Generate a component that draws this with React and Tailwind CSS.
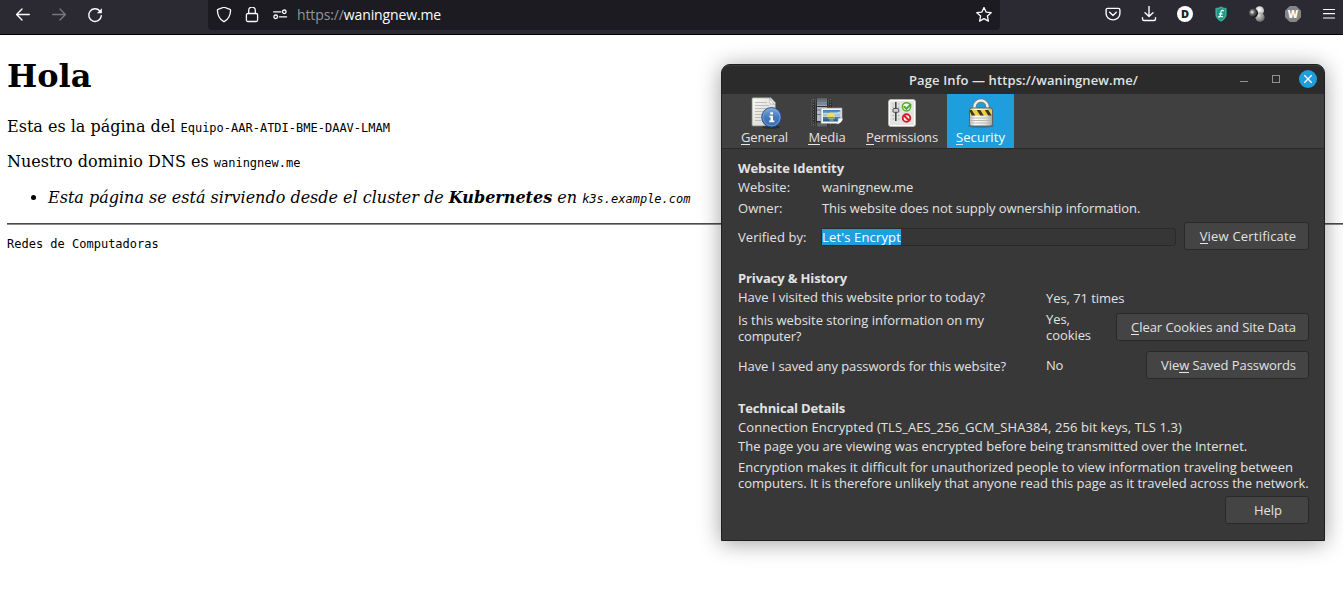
import React from "react";

const ICON = "shrink-0 block";

function Key({ children }) {
  return <span className="border-b border-[#e6e6e6] inline-block h-[16px]">{children}</span>;
}

function Button({ className, children }) {
  return (
    <button
      className={`h-7 shrink-0 rounded-[3px] border border-[#292929] bg-[#444444] text-[13px] leading-4 text-[#e2e2e2] whitespace-nowrap ${className}`}
    >
      {children}
    </button>
  );
}

function BrowserBar() {
  return (
    <header className="flex h-[35px] w-full items-start border-b border-black bg-[#2b2a33] text-[#fbfbfe]">
      <div className="flex h-[30px] w-[208px] items-center gap-5 pl-[15px]">
        <svg className={ICON} width="16" height="16" viewBox="0 0 16 16" fill="none" stroke="currentColor" strokeWidth="1.4" strokeLinecap="round" strokeLinejoin="round">
          <path d="M14.3 7.500H1.800M7 2.100 1.600 7.500 7 12.900" />
        </svg>
        <svg className={`${ICON} text-[#77767d]`} width="16" height="16" viewBox="0 0 16 16" fill="none" stroke="currentColor" strokeWidth="1.4" strokeLinecap="round" strokeLinejoin="round">
          <path d="M1.700 7.500h12.500M9 2.100 14.400 7.500 9 12.900" />
        </svg>
        <svg className={ICON} width="16" height="16" viewBox="0 0 16 16" fill="none" stroke="currentColor" strokeWidth="1.4" strokeLinecap="round">
          <path d="M12.800 4A6.300 6.300 0 1 0 14.300 8.600" />
          <path d="M14.900 1.200v5h-5z" fill="currentColor" stroke="none" />
        </svg>
      </div>
      <div className="flex h-[30px] w-[792px] items-center rounded-b bg-[#1c1b22] pl-2">
        <svg className={ICON} width="16" height="16" viewBox="0 0 16 16" fill="none" stroke="currentColor" strokeWidth="1.3" strokeLinejoin="round">
          <path d="M8 .2 14 2.400c.4.100.6.500.6.900-.2 5-1.900 8.800-6.100 11.100a1 1 0 0 1-1 0C3.300 12.100 1.600 8.300 1.400 3.300c0-.4.200-.8.600-.9z" />
        </svg>
        <svg className={`${ICON} ml-3`} width="16" height="16" viewBox="0 0 16 16" fill="none" stroke="currentColor" strokeWidth="1.3">
          <rect x="2.400" y="6.500" width="11.200" height="8" rx="1.500" />
          <path d="M4.700 6.500V3.500a3.300 3.300 0 0 1 6.600 0v3" />
        </svg>
        <svg className={`${ICON} ml-3`} width="16" height="16" viewBox="0 0 16 16" fill="none" stroke="currentColor" strokeWidth="1.300" strokeLinecap="round">
          <path d="M1.600 4.800h7.200M7.400 9.800h7.200" />
          <circle cx="12.300" cy="4.800" r="1.800" />
          <circle cx="3.700" cy="9.800" r="1.800" />
        </svg>
        <span className="ml-[9px] flex-1 text-[14px] leading-5 tracking-[-0.12px] font-['Open_Sans',sans-serif]">
          <span className="text-[#94939a]">https://</span>waningnew.me
        </span>
        <svg className={`${ICON} mr-2`} width="16" height="16" viewBox="0 0 16 16" fill="none" stroke="currentColor" strokeWidth="1.300" strokeLinejoin="round">
          <path d="m8 .4 2.100 4.700 5.100.6-3.800 3.400 1 5L8 11.600l-4.400 2.500 1-5L.8 5.700l5.100-.6z" />
        </svg>
      </div>
      <div className="flex h-7 flex-1 items-center justify-end gap-5 pr-[6px]">
        <svg className={ICON} width="16" height="16" viewBox="0 0 16 16" fill="none" stroke="currentColor" strokeWidth="1.400" strokeLinecap="round" strokeLinejoin="round">
          <path d="M2.600 2.400h10.800A1.500 1.500 0 0 1 14.900 3.900V7.500a6.900 6.400 0 0 1-13.800 0V3.900A1.500 1.500 0 0 1 2.600 2.400z" />
          <path d="m4.700 6.200 3.300 3.200 3.300-3.200" />
        </svg>
        <svg className={ICON} width="16" height="16" viewBox="0 0 16 16" fill="none" stroke="currentColor" strokeWidth="1.400" strokeLinecap="round" strokeLinejoin="round">
          <path d="M8 .4v10M4 6.800l4 3.800 4-3.800M1.500 11.700v1.300a1.500 1.500 0 0 0 1.500 1.500h10a1.500 1.500 0 0 0 1.500-1.500v-1.300" />
        </svg>
        <span className="grid size-4 shrink-0 place-items-center rounded-full bg-white text-[11px] leading-4 font-extrabold text-[#202020] font-['Open_Sans',sans-serif]">
          D
        </span>
        <svg className={ICON} width="16" height="16" viewBox="0 0 16 16">
          <path d="M8 .3c1.700 1.100 3.700 1.700 5.700 1.700v6.200c0 3.500-2.700 6.300-5.700 7.500-3-1.200-5.700-4-5.700-7.500V2C4.300 2 6.300 1.400 8 .3z" fill="#1c9a83" />
          <path d="M8 1.500c1.400.8 3.100 1.300 4.700 1.400v5.300c0 2.900-2.200 5.300-4.700 6.400-2.500-1.100-4.700-3.500-4.700-6.400V2.900c1.600-.1 3.300-.6 4.700-1.400z" fill="none" stroke="#76c4b5" strokeWidth=".5" />
          <path d="M10.500 5.400c-.2-1.500-2.400-1.300-2.600.6L7.300 9.800c-.2 1.100-1.200 1.500-1.700 1 .5-1.100 2.200-.1 4.500 0M6 7.800h3.600" fill="none" stroke="#fff" strokeWidth="1.200" />
        </svg>
        <svg className={ICON} width="16" height="16" viewBox="0 0 16 16">
          <defs>
            <radialGradient id="dark" cx=".35" cy=".4" r=".65">
              <stop offset="0" stopColor="#fff" />
              <stop offset=".35" stopColor="#777" />
              <stop offset="1" stopColor="#080808" />
            </radialGradient>
            <radialGradient id="lite" cx=".45" cy=".4" r=".65">
              <stop offset="0" stopColor="#fff" />
              <stop offset="1" stopColor="#b0b0b0" />
            </radialGradient>
            <radialGradient id="mid" cx=".35" cy=".3" r=".75">
              <stop offset="0" stopColor="#ddd" />
              <stop offset="1" stopColor="#666" />
            </radialGradient>
          </defs>
          <circle cx="10.600" cy="4.600" r="4.400" fill="url(#lite)" />
          <circle cx="11" cy="11.200" r="4.600" fill="url(#mid)" />
          <circle cx="4.500" cy="7" r="4.500" fill="url(#dark)" />
        </svg>
        <span className="grid size-4 shrink-0 place-items-center bg-[#868686] text-[10px] leading-4 font-extrabold text-white font-['Open_Sans',sans-serif] [clip-path:polygon(30%_0,70%_0,100%_30%,100%_70%,70%_100%,30%_100%,0_70%,0_30%)]">
          W
        </span>
        <svg className={ICON} width="16" height="16" viewBox="0 0 16 16" fill="none" stroke="currentColor" strokeWidth="1.200" strokeLinecap="round">
          <path d="M2.500 3.500h11M2.500 7.700h11M2.500 12h11" />
        </svg>
      </div>
    </header>
  );
}

function WebPage() {
  return (
    <main className="ml-[7px] pt-[22px] text-[16px] leading-[19px] text-black font-['DejaVu_Serif',serif]">
      <h1 className="text-[32px] leading-[38px] font-bold">Hola</h1>
      <p className="mt-[22px]">
        Esta es la página del{" "}
        <code className="text-[12px] leading-none font-['DejaVu_Sans_Mono',monospace]">Equipo-AAR-ATDI-BME-DAAV-LMAM</code>
      </p>
      <p className="mt-4">
        Nuestro dominio DNS es{" "}
        <code className="text-[12px] leading-none font-['DejaVu_Sans_Mono',monospace]">waningnew.me</code>
      </p>
      <ul className="mt-[17px] list-disc pl-[41px]">
        <li>
          <i>
            Esta página se está sirviendo desde el cluster de <b>Kubernetes</b> en{" "}
            <code className="text-[12px] leading-none font-['DejaVu_Sans_Mono',monospace]">k3s.example.com</code>
          </i>
        </li>
      </ul>
      <hr className="mt-4 h-[2px] border-0 border-t border-b border-t-[#4c4c4c] border-b-[#8a8a8a]" />
      <footer className="mt-3 text-[12px] leading-[15px] font-['DejaVu_Sans_Mono',monospace]">Redes de Computadoras</footer>
    </main>
  );
}

function GeneralIcon() {
  return (
    <svg className={ICON} width="32" height="32" viewBox="0 0 32 32">
      <defs>
        <linearGradient id="paper" x1="0" y1="0" x2="1" y2="1">
          <stop offset="0" stopColor="#fafaf8" />
          <stop offset="1" stopColor="#cfcfca" />
        </linearGradient>
        <linearGradient id="info" x1="0" y1="0" x2="0" y2="1">
          <stop offset="0" stopColor="#82aadc" />
          <stop offset=".5" stopColor="#4579ba" />
          <stop offset="1" stopColor="#386caf" />
        </linearGradient>
      </defs>
      <path d="M4 .8h18l4.500 4.700v23.500H4a1 1 0 0 1-1-1V1.800a1 1 0 0 1 1-1z" fill="url(#paper)" stroke="#85857f" strokeWidth=".8" />
      <path d="M20.500 1.500c1 2-.3 4 .5 5s3-.2 4.500 1z" fill="#fff" stroke="#999" strokeWidth=".6" />
      <path d="M6 5.500h12M6 8.500h14M6 11.500h14M6 14.500h8M6 17.500h7M6 20.500h6M6 23.500h6" stroke="#bcbcb8" strokeWidth="1" />
      <ellipse cx="22" cy="30" rx="9" ry="1.800" fill="#000" opacity=".3" />
      <circle cx="22.500" cy="20.300" r="9.800" fill="url(#info)" stroke="#204a87" strokeWidth=".9" />
      <circle cx="22.500" cy="20.300" r="8.500" fill="none" stroke="#83aee0" strokeWidth=".7" />
      <path d="M21.300 15.200h2.700v2.300h-2.700zM20.300 18.700h3.700v4.900h1.400v1.600h-5.200v-1.600h1.300v-3.300h-1.200z" fill="#fff" />
    </svg>
  );
}

function MediaIcon() {
  return (
    <svg className={ICON} width="32" height="32" viewBox="0 0 32 32">
      <defs>
        <linearGradient id="film" x1="0" y1="0" x2="0" y2="1">
          <stop offset="0" stopColor="#1c1c1c" stopOpacity="0" />
          <stop offset=".35" stopColor="#2a2a2a" />
          <stop offset=".75" stopColor="#2a2a2a" />
          <stop offset="1" stopColor="#2a2a2a" stopOpacity="0" />
        </linearGradient>
        <linearGradient id="frame" x1="0" y1="0" x2="0" y2="1">
          <stop offset="0" stopColor="#585a5f" />
          <stop offset="1" stopColor="#a5abb5" />
        </linearGradient>
        <linearGradient id="sky" x1="0" y1="0" x2="0" y2="1">
          <stop offset="0" stopColor="#3f76b8" />
          <stop offset=".6" stopColor="#b8d4e8" />
          <stop offset=".61" stopColor="#4c83bd" />
          <stop offset="1" stopColor="#1f568f" />
        </linearGradient>
      </defs>
      <path d="M1 1h20v30H1z" fill="url(#film)" />
      <path d="M2.500 2v28M19.500 2v8M19.500 27v3" stroke="#777" strokeWidth="1" strokeDasharray="1 1.500" />
      <path d="M1 2v27M4.500 2v27M17.500 2v8" stroke="#858585" strokeWidth=".6" opacity=".6" />
      <path d="M6 1h10v8H6z" fill="url(#frame)" />
      <path d="M6 10h10v14H6z" fill="#b4bac5" />
      <path d="M6 4.500h10M6 7h10M6 13h10M6 17.500h10" stroke="#5f7590" strokeWidth="1" />
      <path d="M6 25.500h10v4H6z" fill="#888d95" opacity=".5" />
      <path d="M11 11h20v12l-3.500 3.500H11a1 1 0 0 1-1-1V12a1 1 0 0 1 1-1z" fill="#f6f6f4" stroke="#9b9b98" strokeWidth=".8" />
      <path d="M12 13h17.500v8.500l-3 3H12z" fill="url(#sky)" />
      <path d="M12 16.500c3-2 5 .4 8-.6s6 .6 9.500-1.900v3.500H12z" fill="#e2edf2" opacity=".7" />
      <path d="M15.500 19.700a4.200 4.200 0 0 1 8.400 0z" fill="#f6dd50" />
      <path d="M17 21.200h7M18.500 23h4" stroke="#d8cb72" strokeWidth=".9" />
      <path d="M31.500 21.500c-2-.5-3-.3-4.500 0 .5 2 0 4-1.500 5.500 3 0 6-2.500 6-5.500z" fill="#fff" stroke="#aaa" strokeWidth=".5" />
    </svg>
  );
}

function PermissionsIcon() {
  return (
    <svg className={ICON} width="32" height="32" viewBox="0 0 32 32">
      <rect x="2.500" y="2.500" width="27" height="27" rx="2.500" fill="#e4e4e2" stroke="#b5b5b1" />
      <rect x="3.500" y="3.500" width="25" height="25" rx="1.500" fill="none" stroke="#fff" />
      <path d="M9.800 5v19" stroke="#3e4446" strokeWidth="1.600" />
      <path d="M6.500 7h1.500M6.500 10h1.500M6.500 18.500h1.500M6.500 22h1.500M12 7h1.500M12 10h1.500M12 18.500h1.500M12 22h1.500" stroke="#aaa" />
      <rect x="7" y="11.500" width="5.800" height="3.800" rx="1" fill="#cfd1cf" stroke="#464a4b" />
      <circle cx="20.500" cy="9.800" r="4.100" fill="#fff" stroke="#4eb025" strokeWidth="1.500" />
      <path d="m17.800 9.200 2.700 2.500L25 7" fill="none" stroke="#4eb025" strokeWidth="2.200" />
      <circle cx="20.500" cy="21" r="3.800" fill="#fff" stroke="#d61b25" strokeWidth="1.900" />
      <path d="m18 18.500 5 5" stroke="#d61b25" strokeWidth="2" />
    </svg>
  );
}

function SecurityIcon() {
  return (
    <svg className={ICON} width="32" height="32" viewBox="0 0 32 32">
      <defs>
        <linearGradient id="steel" x1="0" y1="0" x2="1" y2="0">
          <stop offset="0" stopColor="#b8b8b4" />
          <stop offset=".25" stopColor="#fff" />
          <stop offset=".7" stopColor="#e5e5e2" />
          <stop offset="1" stopColor="#a5a5a1" />
        </linearGradient>
        <clipPath id="band">
          <path d="M5 13h22v5.500H5z" />
        </clipPath>
      </defs>
      <ellipse cx="16" cy="29" rx="13" ry="1.700" fill="#000" opacity=".2" />
      <path d="M9.500 12V9.500a6.500 6 0 0 1 13 0V12" fill="none" stroke="#777873" strokeWidth="4" />
      <path d="M9.500 12V9.500a6.500 6 0 0 1 13 0V12" fill="none" stroke="#eeeeec" strokeWidth="2.400" />
      <rect x="4.500" y="11" width="23" height="18" rx="2" fill="url(#steel)" stroke="#62635f" />
      <path d="M5 13h22v5.500H5z" fill="#ecd040" />
      <g clipPath="url(#band)" fill="#39372a">
        <path d="M4 12.500h2.500l4 6.500H7zM11.500 12.500h3.500l4 6.500h-3.500zM19.500 12.500h3.500l4 6.500h-3.500z" />
      </g>
      <path d="M5.500 21h21M5.500 23.500h21M5.500 26h21" stroke="#b2b2ae" strokeWidth=".9" />
    </svg>
  );
}

function Tab({ icon, label, className }) {
  return (
    <div className={`flex h-[54px] shrink-0 flex-col items-center pt-[3px] text-[13px] leading-4 ${className}`}>
      {icon}
      <span className="block h-[17px]">
        <Key>{label[0]}</Key>
        {label.slice(1)}
      </span>
    </div>
  );
}

function PageInfoWindow() {
  return (
    <section className="absolute top-[64px] left-[721px] flex h-[477px] w-[604px] flex-col overflow-visible rounded-t-[9px] border border-[#1f1f1f] bg-[#383838] text-[13px] leading-4 text-[#e2e2e2] shadow-[0_2px_22px_rgba(0,0,0,0.38)] font-['Open_Sans',sans-serif] whitespace-nowrap">
      <div className="flex h-[29px] items-center rounded-t-lg border-t border-[#3a3a3a] bg-[#2b2b2b]">
        <div className="flex-1 pl-[187px] font-semibold tracking-[0.114px]">Page Info — https://waningnew.me/</div>
        <svg className={`${ICON} mr-1 mb-[2px]`} width="85" height="20" viewBox="0 0 85 20" fill="none">
          <path d="M5 12.500h8" stroke="#929292" />
          <rect x="37.500" y="6.500" width="7" height="7" stroke="#929292" />
          <circle cx="73" cy="10" r="9" fill="#1f9ede" />
          <path d="m69.300 6.300 7.400 7.400M76.700 6.300l-7.400 7.400" stroke="#fff" strokeWidth="1.300" />
        </svg>
      </div>
      <div className="flex h-[55px] border-b border-[#2a2a2a] bg-[#404040] pl-[10px]">
        <Tab icon={<GeneralIcon />} label="General" className="w-[65px] tracking-[-0.12px]" />
        <Tab icon={<MediaIcon />} label="Media" className="w-[60px] tracking-[-0.05px]" />
        <Tab icon={<PermissionsIcon />} label="Permissions" className="w-[90px] tracking-[-0.128px]" />
        <Tab icon={<SecurityIcon />} label="Security" className="w-[67px] bg-[#1f9ede] tracking-[0.079px] text-white" />
      </div>

      <div className="flex flex-1 flex-col pt-[11px] pr-[15px] pl-4">
        <h2 className="font-bold tracking-[-0.063px]">Website Identity</h2>
        <div className="mt-[3px] flex">
          <span className="w-[84px]">Website:</span>
          <span className="tracking-[-0.03px]">waningnew.me</span>
        </div>
        <div className="mt-[5px] flex">
          <span className="w-[84px] tracking-[0.052px]">Owner:</span>
          <span className="tracking-[-0.036px]">This website does not supply ownership information.</span>
        </div>
        <div className="mt-[6px] flex h-7">
          <span className="w-[83px] pt-[7px] tracking-[0.05px]">Verified by:</span>
          <div className="mt-[6px] h-[18px] w-[355px] rounded-[3px] border border-[#2a2a2a] bg-[#363636]">
            <span className="block w-[79px] bg-[#1f9ede] tracking-[0.156px] text-white">Let's Encrypt</span>
          </div>
          <Button className="ml-auto w-[125px] pl-[3px] tracking-[0.2px]">
            <Key>V</Key>iew Certificate
          </Button>
        </div>

        <h2 className="mt-5 font-bold tracking-[-0.131px]">Privacy &amp; History</h2>
        <div className="mt-[3px] flex">
          <span className="w-[308px] tracking-[-0.017px]">Have I visited this website prior to today?</span>
          <span className="mt-px -mb-px tracking-[-0.07px]">Yes, 71 times</span>
        </div>
        <div className="mt-[6px] flex h-[33px]">
          <p className="w-[308px] pt-px">
            <span className="tracking-[-0.031px]">Is this website storing information on my</span>
            <br />
            <span className="tracking-[-0.18px]">computer?</span>
          </p>
          <p className="tracking-[-0.068px]">
            Yes,
            <br />
            cookies
          </p>
          <Button className="mt-[2px] ml-auto w-[193px] pl-[2px] tracking-[-0.047px]">
            <Key>C</Key>lear Cookies and Site Data
          </Button>
        </div>
        <div className="mt-[7px] flex h-7">
          <span className="w-[308px] pt-[7px] tracking-[-0.082px]">Have I saved any passwords for this website?</span>
          <span className="pt-[6px] tracking-[-0.3px]">No</span>
          <Button className="ml-auto w-[163px] pl-[2px] tracking-[-0.052px]">
            Vie<Key>w</Key> Saved Passwords
          </Button>
        </div>

        <h2 className="mt-[21px] font-bold tracking-[-0.178px]">Technical Details</h2>
        <p className="mt-[3px] tracking-[0.089px]">Connection Encrypted (TLS_AES_256_GCM_SHA384, 256 bit keys, TLS 1.3)</p>
        <p className="mt-[3px] tracking-[0.008px]">The page you are viewing was encrypted before being transmitted over the Internet.</p>
        <p className="mt-[5px] tracking-[0.033px]">
          Encryption makes it difficult for unauthorized people to view information traveling between
        </p>
        <p className="tracking-[-0.022px]">
          computers. It is therefore unlikely that anyone read this page as it traveled across the network.
        </p>
        <Button className="mt-[5px] w-[84px] self-end pl-[2px]">Help</Button>
      </div>
    </section>
  );
}

export default function App() {
  return (
    <div className="relative h-[605px] w-full overflow-hidden bg-white">
      <BrowserBar />
      <WebPage />
      <PageInfoWindow />
    </div>
  );
}
